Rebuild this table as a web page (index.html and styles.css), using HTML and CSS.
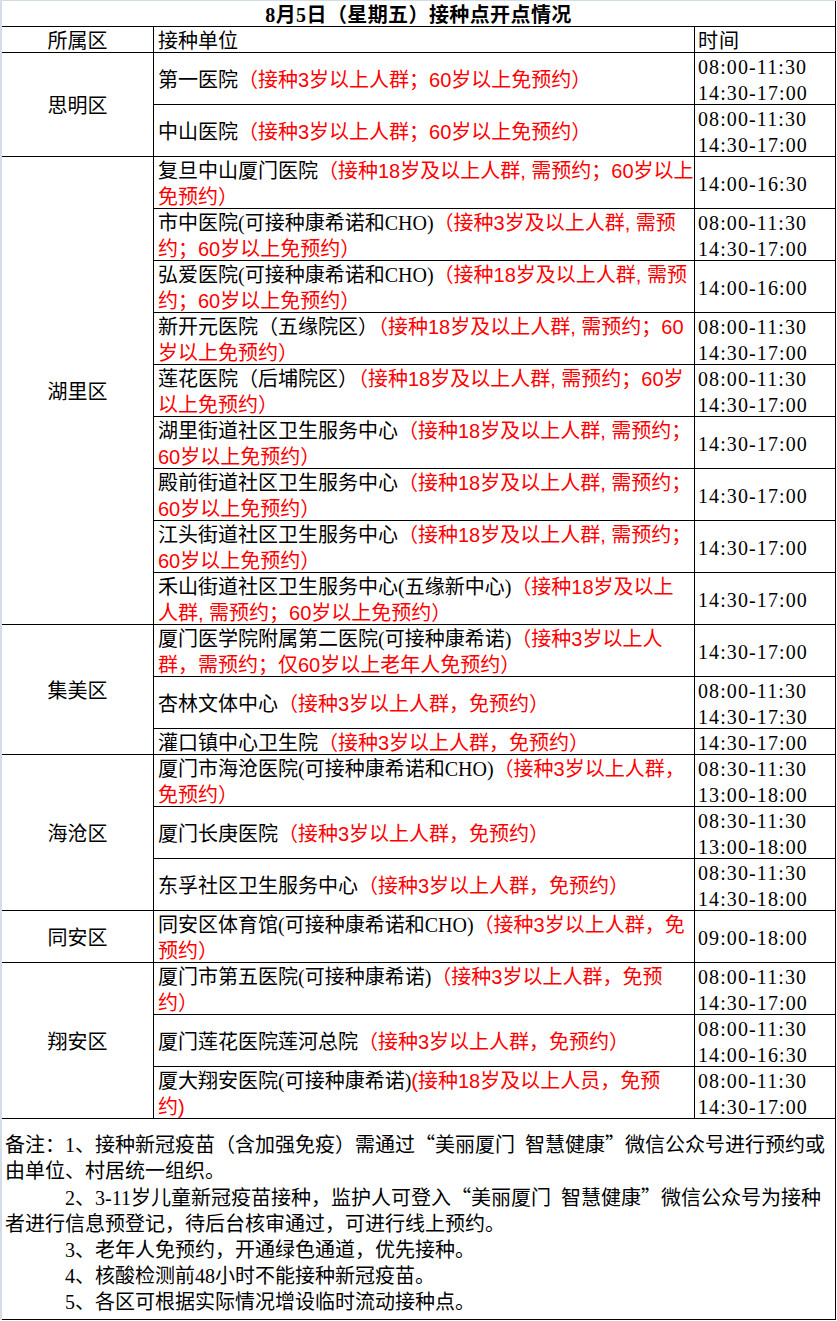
FILE: index.html
```html
<!DOCTYPE html>
<html lang="zh-CN">
<head>
<meta charset="utf-8">
<title>8月5日（星期五）接种点开点情况</title>
<link rel="stylesheet" href="styles.css">
</head>
<body>
<div class="page">
  <div class="sheet">
    <div class="cell title"><div class="t">8月5日（星期五）接种点开点情况</div></div>

    <div class="cell dist"><div class="t">所属区</div></div>
    <div class="cell unit"><div class="t">接种单位</div></div>
    <div class="cell time"><div class="t">时间</div></div>

    <div class="cell dist span2"><div class="t">思明区</div></div>
    <div class="cell unit"><div class="t">第一医院<span class="red">（接种3岁以上人群；60岁以上免预约）</span></div></div>
    <div class="cell time"><div class="t">08:00-11:30<br>14:30-17:00</div></div>
    <div class="cell unit"><div class="t">中山医院<span class="red">（接种3岁以上人群；60岁以上免预约）</span></div></div>
    <div class="cell time"><div class="t">08:00-11:30<br>14:30-17:00</div></div>

    <div class="cell dist span9"><div class="t">湖里区</div></div>
    <div class="cell unit"><div class="t">复旦中山厦门医院<span class="red">（接种18岁及以上人群, 需预约；60岁以上<br>免预约）</span></div></div>
    <div class="cell time"><div class="t">14:00-16:30</div></div>
    <div class="cell unit"><div class="t">市中医院(可接种康希诺和CHO)<span class="red">（接种3岁及以上人群, 需预<br>约；60岁以上免预约）</span></div></div>
    <div class="cell time"><div class="t">08:00-11:30<br>14:30-17:00</div></div>
    <div class="cell unit"><div class="t">弘爱医院(可接种康希诺和CHO)<span class="red">（接种18岁及以上人群, 需预<br>约；60岁以上免预约）</span></div></div>
    <div class="cell time"><div class="t">14:00-16:00</div></div>
    <div class="cell unit"><div class="t">新开元医院（五缘院区）<span class="red">（接种18岁及以上人群, 需预约；60<br>岁以上免预约）</span></div></div>
    <div class="cell time"><div class="t">08:00-11:30<br>14:30-17:00</div></div>
    <div class="cell unit"><div class="t">莲花医院（后埔院区）<span class="red">（接种18岁及以上人群, 需预约；60岁<br>以上免预约）</span></div></div>
    <div class="cell time"><div class="t">08:00-11:30<br>14:30-17:00</div></div>
    <div class="cell unit"><div class="t">湖里街道社区卫生服务中心<span class="red">（接种18岁及以上人群, 需预约；<br>60岁以上免预约）</span></div></div>
    <div class="cell time"><div class="t">14:30-17:00</div></div>
    <div class="cell unit"><div class="t">殿前街道社区卫生服务中心<span class="red">（接种18岁及以上人群, 需预约；<br>60岁以上免预约）</span></div></div>
    <div class="cell time"><div class="t">14:30-17:00</div></div>
    <div class="cell unit"><div class="t">江头街道社区卫生服务中心<span class="red">（接种18岁及以上人群, 需预约；<br>60岁以上免预约）</span></div></div>
    <div class="cell time"><div class="t">14:30-17:00</div></div>
    <div class="cell unit"><div class="t">禾山街道社区卫生服务中心(五缘新中心)<span class="red">（接种18岁及以上<br>人群, 需预约；60岁以上免预约）</span></div></div>
    <div class="cell time"><div class="t">14:30-17:00</div></div>

    <div class="cell dist span3"><div class="t">集美区</div></div>
    <div class="cell unit"><div class="t">厦门医学院附属第二医院(可接种康希诺)<span class="red">（接种3岁以上人<br>群，需预约；仅60岁以上老年人免预约）</span></div></div>
    <div class="cell time"><div class="t">14:30-17:00</div></div>
    <div class="cell unit"><div class="t">杏林文体中心<span class="red">（接种3岁以上人群，免预约）</span></div></div>
    <div class="cell time"><div class="t">08:00-11:30<br>14:30-17:30</div></div>
    <div class="cell unit"><div class="t">灌口镇中心卫生院<span class="red">（接种3岁以上人群，免预约）</span></div></div>
    <div class="cell time"><div class="t">14:30-17:00</div></div>

    <div class="cell dist span3"><div class="t">海沧区</div></div>
    <div class="cell unit"><div class="t">厦门市海沧医院(可接种康希诺和CHO)<span class="red">（接种3岁以上人群，<br>免预约）</span></div></div>
    <div class="cell time"><div class="t">08:30-11:30<br>13:00-18:00</div></div>
    <div class="cell unit"><div class="t">厦门长庚医院<span class="red">（接种3岁以上人群，免预约）</span></div></div>
    <div class="cell time"><div class="t">08:30-11:30<br>13:00-18:00</div></div>
    <div class="cell unit"><div class="t">东孚社区卫生服务中心<span class="red">（接种3岁以上人群，免预约）</span></div></div>
    <div class="cell time"><div class="t">08:30-11:30<br>14:30-18:00</div></div>

    <div class="cell dist"><div class="t">同安区</div></div>
    <div class="cell unit"><div class="t">同安区体育馆(可接种康希诺和CHO)<span class="red">（接种3岁以上人群，免<br>预约）</span></div></div>
    <div class="cell time"><div class="t">09:00-18:00</div></div>

    <div class="cell dist span3"><div class="t">翔安区</div></div>
    <div class="cell unit"><div class="t">厦门市第五医院(可接种康希诺)<span class="red">（接种3岁以上人群，免预<br>约）</span></div></div>
    <div class="cell time"><div class="t">08:00-11:30<br>14:30-17:00</div></div>
    <div class="cell unit"><div class="t">厦门莲花医院莲河总院<span class="red">（接种3岁以上人群，免预约）</span></div></div>
    <div class="cell time"><div class="t">08:00-11:30<br>14:00-16:30</div></div>
    <div class="cell unit"><div class="t">厦大翔安医院(可接种康希诺)<span class="red">(接种18岁及以上人员，免预<br>约)</span></div></div>
    <div class="cell time"><div class="t">08:00-11:30<br>14:30-17:00</div></div>

    <div class="cell notes">
      <div class="line">备注：1、接种新冠疫苗（含加强免疫）需通过<span class="q">“</span>美丽厦门&ensp;智慧健康<span class="q">”</span>微信公众号进行预约或</div>
      <div class="line">由单位、村居统一组织。</div>
      <div class="line indent">2、3-11岁儿童新冠疫苗接种，监护人可登入<span class="q">“</span>美丽厦门&ensp;智慧健康<span class="q">”</span>微信公众号为接种</div>
      <div class="line">者进行信息预登记，待后台核审通过，可进行线上预约。</div>
      <div class="line indent">3、老年人免预约，开通绿色通道，优先接种。</div>
      <div class="line indent">4、核酸检测前48小时不能接种新冠疫苗。</div>
      <div class="line indent">5、各区可根据实际情况增设临时流动接种点。</div>
    </div>
  </div>
</div>
</body>
</html>
```

FILE: styles.css
```css
html, body {
  margin: 0;
  padding: 0;
  background: #ffffff;
}

.page {
  width: 835px;
  border-left: 2px solid #d4dce8;
  border-top: 1px solid #d4dce8;
  font-family: "Liberation Serif", "Noto Sans CJK SC", serif;
  font-size: 20px;
  line-height: 26px;
  color: #000000;
}

.sheet {
  display: grid;
  grid-template-columns: 151px 540px 140px;
  grid-template-rows: 25px 25px repeat(13, 51px) 25px repeat(7, 51px) 200px;
  gap: 1px;
  width: 833px;
  background: #000000;
  border-right: 1px solid #000000;
  border-bottom: 1px solid #000000;
}

.cell {
  background: #ffffff;
  display: flex;
  flex-direction: column;
  justify-content: center;
  align-items: flex-start;
  white-space: nowrap;
  padding-top: 2px;
  box-sizing: border-box;
}

.t {
  display: block;
}

.title {
  grid-column: 1 / 4;
  align-items: center;
  font-weight: bold;
  letter-spacing: 0.4px;
}

.dist {
  grid-column: 1;
  align-items: center;
}

.span2 { grid-row: span 2; }
.span3 { grid-row: span 3; }
.span9 { grid-row: span 9; }

.unit {
  grid-column: 2;
  padding-left: 4px;
}

.time {
  grid-column: 3;
  padding-left: 3px;
  letter-spacing: 1.1px;
}

.red {
  color: #ff0000;
  font-family: "Liberation Sans", "Noto Sans CJK SC", sans-serif;
}

.q {
  font-family: "Noto Sans CJK SC", sans-serif;
}

.notes {
  grid-column: 1 / 4;
  justify-content: flex-start;
  padding: 12px 0 0 3px;
}

.line {
  display: block;
}

.indent {
  text-indent: 3em;
}
```
